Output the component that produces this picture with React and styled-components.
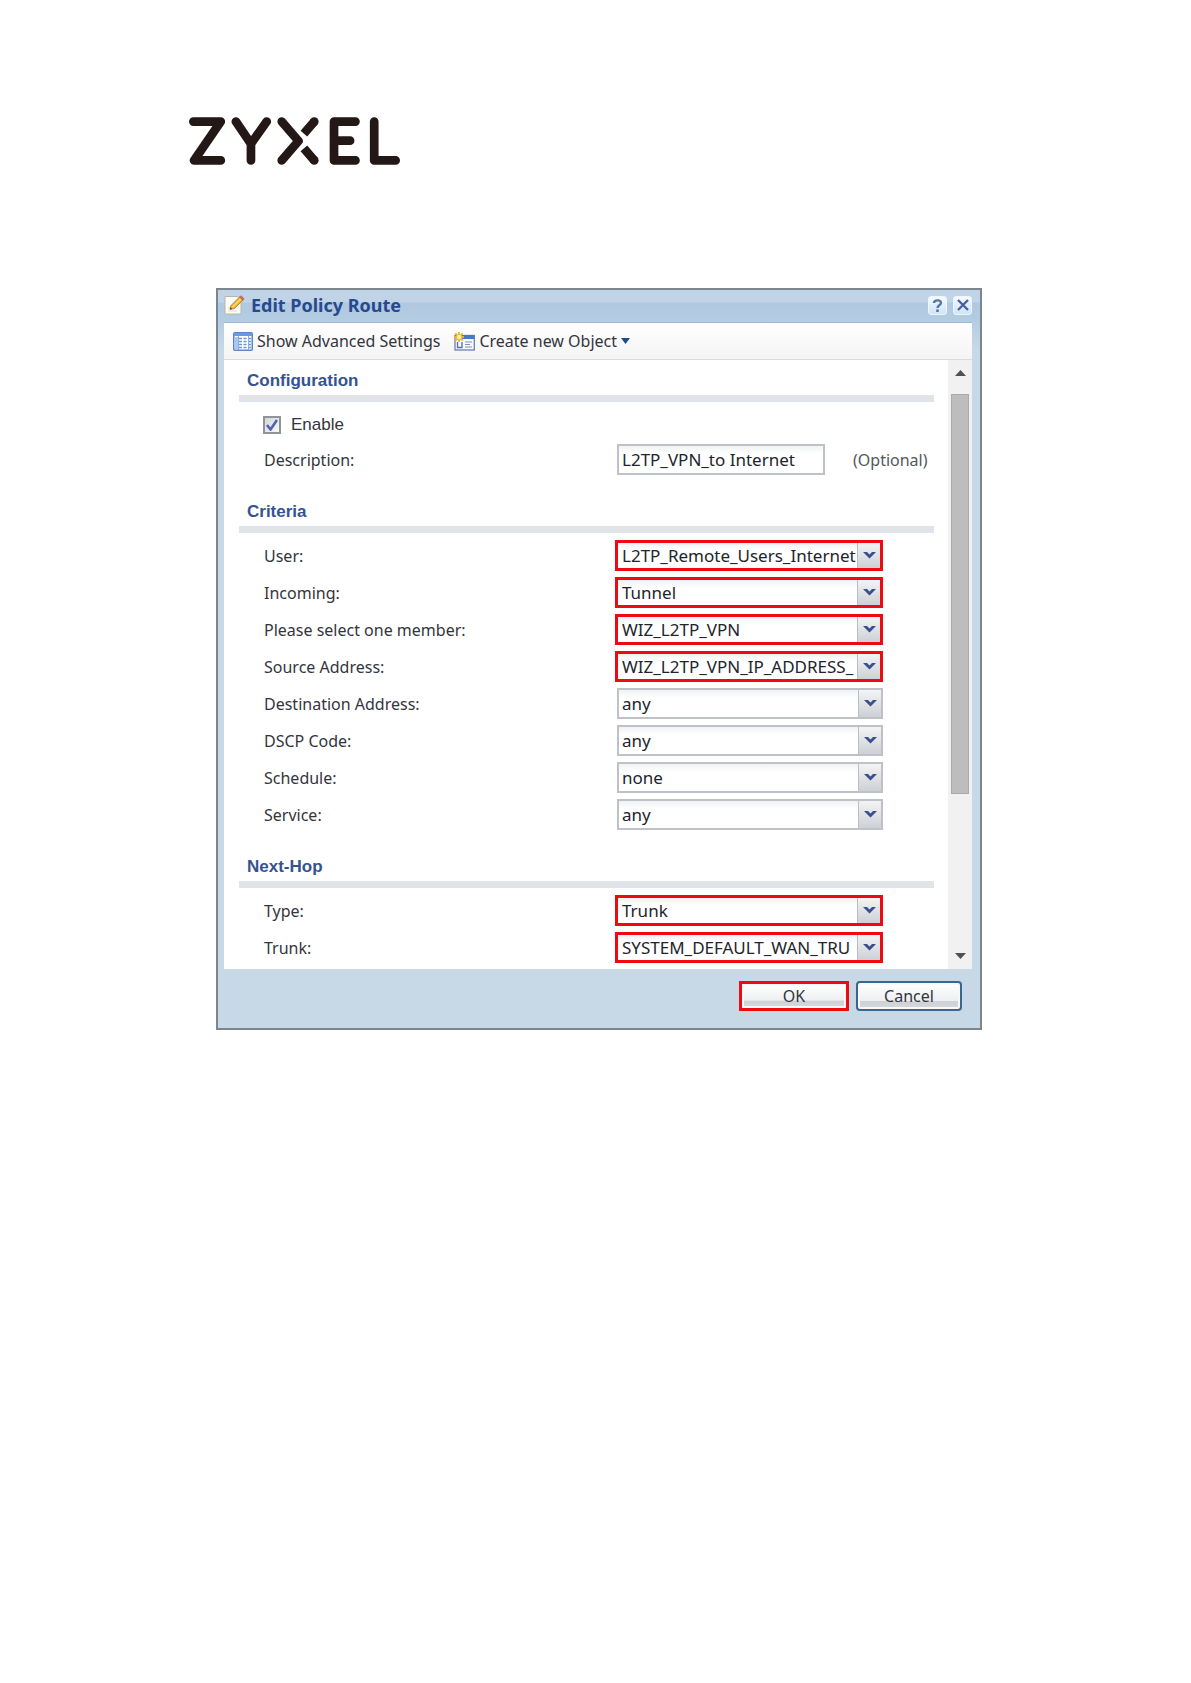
import React, { useState } from 'react';
import styled, { createGlobalStyle, css } from 'styled-components';

const GlobalStyle = createGlobalStyle`
  * {
    box-sizing: border-box;
  }

  body {
    margin: 0;
    background-color: #fff;
    font-family: "Noto Sans", "Open Sans", sans-serif;
    font-size: 16px;
    line-height: 20px;
    color: #33353d;
  }

  button,
  input,
  select {
    font: inherit;
    color: inherit;
  }
`;

const Page = styled.main`
  padding: 117px 209px 120px 189px;
`;

const LogoSvg = styled.svg`
  display: block;
`;

const Dialog = styled.section`
  margin: 123px 0 0 27px;
  padding: 0 8px 0 6px;
  border: 2px solid #7d868d;
  background: linear-gradient(#c1d4e7 0, #c1d4e7 12px, #b0c9e0 13px, #b4cce2 30px, #c7d9e6 60px);
`;

const TitleBar = styled.header`
  display: flex;
  align-items: center;
  gap: 6px;
  height: 33px;
  padding-bottom: 2px;
  border-bottom: 1px solid #9db9d3;
`;

const Title = styled.h1`
  flex: 1;
  margin: 0;
  font-size: 18px;
  font-weight: 700;
  color: #28498f;
`;

const ToolButton = styled.button`
  display: grid;
  place-items: center;
  width: 19px;
  height: 19px;
  padding: 0;
  border: 1px solid #edf6ff;
  border-radius: 3px;
  background: linear-gradient(#f4faff, #cfe5fa);
  cursor: pointer;
`;

const Panel = styled.div`
  background-color: #fff;
`;

const Toolbar = styled.div`
  display: flex;
  align-items: center;
  gap: 14px;
  height: 37px;
  padding: 0 9px;
  border-bottom: 1px solid #dcdcdc;
  background: linear-gradient(#fff, #f4f4f4);
`;

const ToolbarItem = styled.button`
  display: flex;
  align-items: center;
  gap: 4px;
  padding: 0;
  border: none;
  background: none;
  white-space: nowrap;
  cursor: pointer;
`;

const Body = styled.div`
  display: flex;
`;

const Form = styled.form`
  flex: 1;
  padding: 11px 14px 0 15px;
`;

const Section = styled.fieldset`
  min-width: 0;
  margin: 0 0 21px;
  padding: 0;
  border: none;

  &:last-child {
    margin-bottom: 0;
  }
`;

const SectionTitle = styled.legend`
  width: 100%;
  margin-bottom: 7px;
  padding: 0 8px 4px;
  border-bottom: 7px solid #e0e3e8;
  font-family: "Liberation Sans", Arial, sans-serif;
  font-size: 17px;
  font-weight: 700;
  color: #355390;
`;

const Row = styled.div`
  display: flex;
  align-items: center;
  height: 31px;
  margin-bottom: 6px;
  padding-left: 25px;
`;

const OptionRow = styled(Row)`
  height: 24px;
  margin: 4px 0 7px;
  gap: 10px;
  padding-left: 24px;
  font-family: "Liberation Sans", Arial, sans-serif;
  font-size: 17px;
`;

const Label = styled.label`
  width: 353px;
`;

const CheckWrapper = styled.span`
  display: grid;
  place-items: center;

  > * {
    grid-area: 1 / 1;
  }

  svg {
    pointer-events: none;
  }
`;

const Checkbox = styled.input`
  width: 18px;
  height: 18px;
  margin: 0;
  appearance: none;
  border: 2px solid #8f9499;
  background: linear-gradient(135deg, #d3d7da, #f8f8f8);
`;

const TextInput = styled.input`
  width: 208px;
  height: 31px;
  padding: 0 3px;
  border: 2px solid #bec2c7;
  background: linear-gradient(#f0f2f3, #fff 8px);
  font-size: 17px;
  color: #22242c;
`;

const Hint = styled.span`
  margin-left: 28px;
  color: #55565c;
`;

const SelectBox = styled.div`
  display: flex;
  width: 266px;
  height: 31px;
  border: 2px solid #bec2c7;
  background: linear-gradient(#f0f2f3, #fff 8px);

  ${({ $marked }) => $marked && css`
    width: 268px;
    margin-left: -2px;
    border: 3px solid #ee0a10;
    padding-left: 1px;
  `}
`;

const Select = styled.select`
  flex: 1;
  min-width: 0;
  padding: 0 0 0 3px;
  appearance: none;
  border: none;
  background: transparent;
  font-size: 17px;
  color: #22242c;
  text-overflow: clip;
`;

const Trigger = styled.span`
  display: grid;
  place-items: center;
  width: 23px;
  border-left: 1px solid #b9bec4;
  background: linear-gradient(#f3f4f5, #cdd0d5);
  pointer-events: none;
`;

const ScrollBar = styled.div`
  display: flex;
  flex-direction: column;
  width: 24px;
  padding: 9px 3px 10px;
  background-color: #f1f1f1;
`;

const ScrollArrow = styled.button`
  display: grid;
  place-items: center;
  height: 7px;
  padding: 0;
  border: none;
  background: none;
`;

const ScrollTrack = styled.div`
  flex: 1;
  margin: 18px 0;
`;

const ScrollThumb = styled.div`
  height: 74%;
  border: 1px solid #aaa;
  background-color: #bdbdbd;
`;

const Footer = styled.footer`
  display: flex;
  justify-content: flex-end;
  gap: 7px;
  padding: 12px 10px 17px;
`;

const ActionButton = styled.button`
  width: 106px;
  height: 30px;
  padding: 0;
  border: 2px solid #3d6489;
  border-radius: 4px;
  background: linear-gradient(#fff, #eeeff1 68%, #ced1d6 70%, #d6d9dd);
  box-shadow: inset 0 0 0 2px #f7f8fa;
  cursor: pointer;

  ${({ $marked }) => $marked && css`
    width: 110px;
    border: 3px solid #ee0a10;
    border-radius: 0;
  `}
`;

const Logo = () => (
  <LogoSvg width="211" height="48" viewBox="57 53 630 142" role="img" aria-label="Zyxel">
    <g fill="none" stroke="#231815" strokeWidth="26" strokeLinecap="round" strokeLinejoin="round">
      <path d="M70 66H152L72 182H152" />
      <path d="M197 66L242 132L289 66M242 132V182" />
      <path d="M334 66L384 124L334 182" />
      <path d="M554 66H490V182H554M490 123H538" />
      <path d="M610 66V182H674" />
    </g>
    <g stroke="#231815" strokeWidth="26">
      <path d="M431 66L400 102M431 182L400 146" />
    </g>
    <circle cx="431" cy="66" r="13" fill="#231815" />
    <circle cx="431" cy="182" r="13" fill="#231815" />
  </LogoSvg>
);

const EditIcon = () => (
  <svg width="21" height="20" viewBox="0 0 21 20" aria-hidden="true">
    <path d="M1 1.5H14L17 5V19H1Z" fill="#fcfcf9" stroke="#b9b6a8" />
    <path d="M4 16H13M4 13H7" stroke="#d9d9d9" />
    <path d="M6 14.5L7 10.5L15.5 2L19 5.2L10.2 13.6Z" fill="#f7b32b" stroke="#a8742a" strokeWidth=".8" />
    <path d="M8.5 12L17 3.8" stroke="#ffe27a" strokeWidth="1.2" />
    <path d="M15.5 2L17 .8L20.2 3.8L19 5.2Z" fill="#d96c5c" stroke="#a75045" strokeWidth=".6" />
    <path d="M6 14.5L6.5 12.5L8 14Z" fill="#333" />
  </svg>
);

const GridIcon = () => (
  <svg width="20" height="19" viewBox="0 0 20 19" aria-hidden="true">
    <rect x=".75" y=".75" width="18.5" height="17.5" rx="1" fill="#fff" stroke="#5b87c9" strokeWidth="1.5" />
    <path d="M1 1H19V4H1Z" fill="#6d9ade" />
    <path d="M2 5H5V17H2Z" fill="#a9c7ef" />
    <path d="M6 6.5H18M6 9.5H18M6 12.5H18M6 15.5H18" stroke="#6c94d0" strokeWidth="1.3" strokeDasharray="3 1.5" />
    <path d="M5.5 4V18M15.5 4V18" stroke="#8aaee0" />
  </svg>
);

const NewObjectIcon = () => (
  <svg width="21" height="19" viewBox="0 0 21 19" aria-hidden="true">
    <rect x="1" y="3.5" width="19.3" height="14.5" fill="#f6f9fe" stroke="#6a82ad" strokeWidth="1.3" />
    <path d="M8 3H20.5V7H8Z" fill="#4478cf" />
    <path d="M11 10H18M11 12.5H16M11 15H18" stroke="#7c94bb" />
    <path d="M3.5 10V15.5H8V10" fill="none" stroke="#59719c" strokeWidth="1.3" />
    <path d="M5 0V10M0 5H10M1.3 1.3L8.7 8.7M8.7 1.3L1.3 8.7" stroke="#e3b52b" strokeWidth="1.8" />
    <circle cx="5" cy="5" r="2.3" fill="#fff18a" />
  </svg>
);

const CaretIcon = () => (
  <svg width="9" height="6" viewBox="0 0 9 6" aria-hidden="true">
    <path d="M0 0H9L4.5 6Z" fill="#224a86" />
  </svg>
);

const ChevronIcon = () => (
  <svg width="13" height="9" viewBox="0 0 13 9" aria-hidden="true">
    <path d="M0 1H4L6.5 3.5L9 1H13L6.5 7.5Z" fill="#38508d" />
  </svg>
);

const fields = {
  criteria: [
    { id: 'user', label: 'User:', value: 'L2TP_Remote_Users_Internet', marked: true },
    { id: 'incoming', label: 'Incoming:', value: 'Tunnel', marked: true },
    { id: 'member', label: 'Please select one member:', value: 'WIZ_L2TP_VPN', marked: true },
    { id: 'source', label: 'Source Address:', value: 'WIZ_L2TP_VPN_IP_ADDRESS_', marked: true },
    { id: 'destination', label: 'Destination Address:', value: 'any' },
    { id: 'dscp', label: 'DSCP Code:', value: 'any' },
    { id: 'schedule', label: 'Schedule:', value: 'none' },
    { id: 'service', label: 'Service:', value: 'any' },
  ],
  nextHop: [
    { id: 'type', label: 'Type:', value: 'Trunk', marked: true },
    { id: 'trunk', label: 'Trunk:', value: 'SYSTEM_DEFAULT_WAN_TRU', marked: true },
  ],
};

const SelectRow = ({ field }) => (
  <Row>
    <Label htmlFor={field.id}>{field.label}</Label>
    <SelectBox $marked={field.marked}>
      <Select id={field.id} defaultValue={field.value}>
        <option value={field.value}>{field.value}</option>
      </Select>
      <Trigger>
        <ChevronIcon />
      </Trigger>
    </SelectBox>
  </Row>
);

const App = () => {
  const [enabled, setEnabled] = useState(true);

  return (
    <Page>
      <GlobalStyle />
      <Logo />
      <Dialog role="dialog" aria-labelledby="dialog-title">
        <TitleBar>
          <EditIcon />
          <Title id="dialog-title">Edit Policy Route</Title>
          <ToolButton type="button" aria-label="Help">
            <svg width="11" height="13" viewBox="0 0 11 13" aria-hidden="true">
              <path d="M2 4C2 .5 9 .5 9 4C9 6 5.5 6 5.5 9" fill="none" stroke="#5478a8" strokeWidth="2.4" />
              <path d="M4.2 10.4H6.8V13H4.2Z" fill="#5478a8" />
            </svg>
          </ToolButton>
          <ToolButton type="button" aria-label="Close">
            <svg width="12" height="12" viewBox="0 0 12 12" aria-hidden="true">
              <path d="M1 1L11 11M11 1L1 11" stroke="#4a60a6" strokeWidth="2.4" />
            </svg>
          </ToolButton>
        </TitleBar>
        <Panel>
          <Toolbar>
            <ToolbarItem type="button">
              <GridIcon />
              Show Advanced Settings
            </ToolbarItem>
            <ToolbarItem type="button">
              <NewObjectIcon />
              Create new Object
              <CaretIcon />
            </ToolbarItem>
          </Toolbar>
          <Body>
            <Form onSubmit={(e) => e.preventDefault()}>
              <Section>
                <SectionTitle>Configuration</SectionTitle>
                <OptionRow>
                  <CheckWrapper>
                    <Checkbox
                      id="enable"
                      type="checkbox"
                      checked={enabled}
                      onChange={(e) => setEnabled(e.target.checked)}
                    />
                    {enabled && (
                      <svg width="12" height="12" viewBox="0 0 12 12" aria-hidden="true">
                        <path d="M1 6L4.5 10.5L11 1" fill="none" stroke="#5560ae" strokeWidth="2.6" />
                      </svg>
                    )}
                  </CheckWrapper>
                  <label htmlFor="enable">Enable</label>
                </OptionRow>
                <Row>
                  <Label htmlFor="description">Description:</Label>
                  <TextInput id="description" type="text" defaultValue="L2TP_VPN_to Internet" />
                  <Hint>(Optional)</Hint>
                </Row>
              </Section>
              <Section>
                <SectionTitle>Criteria</SectionTitle>
                {fields.criteria.map((field) => (
                  <SelectRow key={field.id} field={field} />
                ))}
              </Section>
              <Section>
                <SectionTitle>Next-Hop</SectionTitle>
                {fields.nextHop.map((field) => (
                  <SelectRow key={field.id} field={field} />
                ))}
              </Section>
            </Form>
            <ScrollBar>
              <ScrollArrow type="button" aria-label="Scroll up">
                <svg width="11" height="6" viewBox="0 0 11 6" aria-hidden="true">
                  <path d="M0 6H11L5.5 0Z" fill="#505050" />
                </svg>
              </ScrollArrow>
              <ScrollTrack>
                <ScrollThumb />
              </ScrollTrack>
              <ScrollArrow type="button" aria-label="Scroll down">
                <svg width="11" height="6" viewBox="0 0 11 6" aria-hidden="true">
                  <path d="M0 0H11L5.5 6Z" fill="#505050" />
                </svg>
              </ScrollArrow>
            </ScrollBar>
          </Body>
        </Panel>
        <Footer>
          <ActionButton type="button" $marked>OK</ActionButton>
          <ActionButton type="button">Cancel</ActionButton>
        </Footer>
      </Dialog>
    </Page>
  );
};

export default App;
